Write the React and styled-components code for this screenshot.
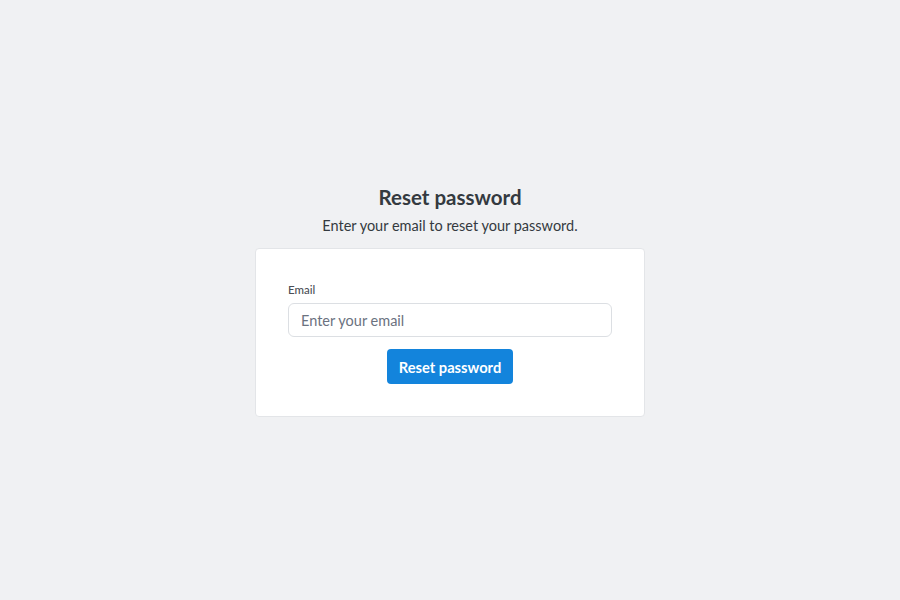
import React from "react";
import styled, { createGlobalStyle } from "styled-components";

const Global = createGlobalStyle`
  html, body { margin: 0; padding: 0; height: 100%; }
  body { background: #f0f1f3; font-family: Lato, "Noto Sans", sans-serif; color: #333840; }
  #root { height: 100%; }
  * { box-sizing: border-box; }
`;

const Page = styled.main`
  height: 600px;
  display: flex;
  flex-direction: column;
  align-items: center;
  justify-content: center;
`;

const Title = styled.h1`
  margin: 0;
  font-size: 20.5px;
  line-height: 28px;
  font-weight: 700;
  color: #343a40;
`;

const Subtitle = styled.p`
  margin: 5px 0 0;
  font-size: 14.5px;
  line-height: 20px;
  color: #343a40;
`;

const Card = styled.form`
  margin-top: 12px;
  width: 390px;
  background: #fff;
  border: 1px solid #e3e5e8;
  border-radius: 4px;
  padding: 32px;
  display: flex;
  flex-direction: column;
  align-items: stretch;
`;

const Label = styled.label`
  font-size: 11.5px;
  line-height: 17px;
  font-weight: 500;
  color: #4b4f56;
  margin-bottom: 5px;
`;

const Input = styled.input`
  height: 34px;
  border: 1px solid #dcdfe3;
  border-radius: 6px;
  padding: 0 12px;
  font-family: inherit;
  font-size: 14.5px;
  color: #343a40;
  outline: none;
  &::placeholder { color: #6b7280; }
`;

const Button = styled.button`
  align-self: center;
  margin-top: 12px;
  height: 35px;
  padding: 0 12px;
  border: none;
  border-radius: 4px;
  background: #1384dc;
  color: #fff;
  font-family: inherit;
  font-size: 14.7px;
  font-weight: 700;
  cursor: pointer;
`;

export default function App() {
  return (
    <>
      <Global />
      <Page>
        <Title>Reset password</Title>
        <Subtitle>Enter your email to reset your password.</Subtitle>
        <Card onSubmit={(e) => e.preventDefault()}>
          <Label htmlFor="email">Email</Label>
          <Input id="email" type="email" placeholder="Enter your email" />
          <Button type="submit">Reset password</Button>
        </Card>
      </Page>
    </>
  );
}
